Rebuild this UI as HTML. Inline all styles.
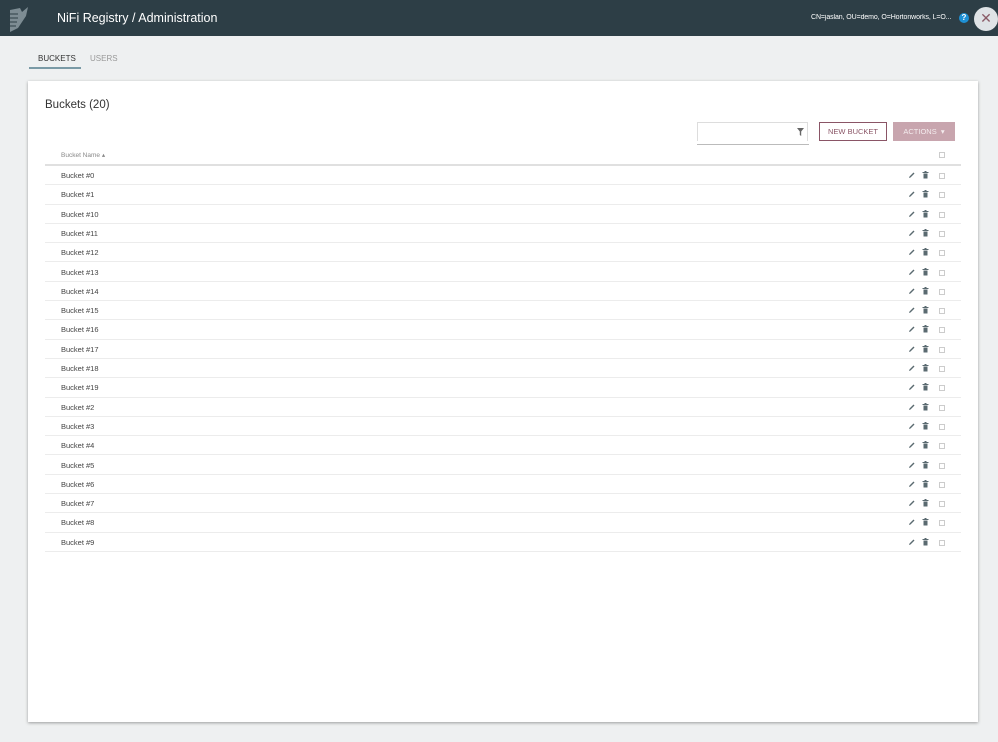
<!DOCTYPE html>
<html><head><meta charset="utf-8"><style>
*{box-sizing:border-box;margin:0;padding:0}
body{width:998px;height:742px;background:#eef0f1;font-family:"Liberation Sans",sans-serif;position:relative;overflow:hidden}
.hdr{position:absolute;left:0;top:0;width:998px;height:36px;background:#2d3e46}
.title{position:absolute;left:57px;top:11px;color:#fff;font-size:12.5px}
.user{position:absolute;left:811px;top:14px;width:142px;overflow:hidden;white-space:nowrap;color:#fff;font-size:7px;letter-spacing:-0.1px}
.help{position:absolute;left:959px;top:13px;width:10px;height:10px;border-radius:50%;background:#1e90d4;color:#fff;font-size:8px;text-align:center;line-height:10px;font-weight:bold}
.close{position:absolute;left:974px;top:7px;width:24px;height:24px;border-radius:50%;background:#dfe3e6;color:#8a5a66;text-align:center;line-height:23px;font-size:14px}
.tab{position:absolute;top:54px;font-size:8px;color:#666}
.card{position:absolute;left:28px;top:81px;width:950px;height:641px;background:#fff;box-shadow:0 1px 3px rgba(0,0,0,.35)}
.h{position:absolute;left:17px;top:18px;font-size:11.5px;color:#333}
.filter{position:absolute;left:669px;top:41px;width:111px;height:19px;border:1px solid #ddd;border-bottom:none}
.fl{position:absolute;left:669px;top:63px;width:112px;height:1px;background:#bbb}
.nb{position:absolute;left:791px;top:41px;width:68px;height:19px;border:1px solid #8a5566;color:#8a5566;font-size:7.5px;text-align:center;line-height:17px}
.act{position:absolute;left:865px;top:41px;width:62px;height:19px;background:#c8a5ae;color:#f4ecee;font-size:7.5px;text-align:center;line-height:19px}
.th{position:absolute;left:33px;top:70px;font-size:6.5px;color:#888}
.thl{position:absolute;left:17px;top:83px;width:916px;height:2px;background:#e0e0e0}
.row{position:absolute;left:17px;width:916px;height:19.3px;border-bottom:1px solid #ececec;font-size:7.5px;color:#444}
.row span{position:absolute;left:16px;top:5px}
.cb{position:absolute;width:6px;height:6px;border:1px solid #ccc}
.ic{position:absolute;top:5px}
</style></head><body>
<div class="hdr">
<svg style="position:absolute;left:8px;top:6px" width="22" height="26" viewBox="0 0 22 26"><path d="M2 4 L12 2 L14 6 L20 1 L18 10 L10 22 L2 26 Z" fill="#7d8c93"/><path d="M2 8h8M2 12h8M2 16h7M2 20h6" stroke="#2d3e46" stroke-width="1"/></svg>
<div class="title">NiFi Registry / Administration</div>
<div class="user">CN=jaslan, OU=demo, O=Hortonworks, L=O...</div>
<div class="help">?</div>
<div class="close">✕</div>
</div>
<div class="tab" style="left:38px;color:#333">BUCKETS</div>
<div class="tab" style="left:90px;color:#999">USERS</div>
<div style="position:absolute;left:29px;top:67px;width:52px;height:2px;background:#7a9aa6"></div>
<div class="card">
<div class="h">Buckets (20)</div>
<div class="filter"><svg style="position:absolute;right:3px;top:5px" width="7" height="8" viewBox="0 0 7 8"><path d="M0 0h7L4.2 3.5V8L2.8 7V3.5Z" fill="#666"/></svg></div>
<div class="fl"></div>
<div class="nb">NEW BUCKET</div>
<div class="act">ACTIONS &nbsp;▾</div>
<div class="th">Bucket Name ▴</div>
<div class="cb" style="left:911px;top:71px"></div>
<div class="thl"></div>
<div id="rows"></div>
</div>
<script>
var n=["0","1","10","11","12","13","14","15","16","17","18","19","2","3","4","5","6","7","8","9"],h="";
for(var i=0;i<20;i++){var t=85+i*19.3;h+='<div class="row" style="top:'+t+'px"><span>Bucket #'+n[i]+'</span><svg class="ic" style="left:863px" width="8" height="8" viewBox="0 0 8 8"><path d="M1 7 L1.5 5.5 L5.5 1.5 L6.5 2.5 L2.5 6.5 Z" fill="#5a6a70"/></svg><svg class="ic" style="left:877px" width="7" height="8" viewBox="0 0 7 8"><rect x="0.5" y="1" width="6" height="1" fill="#5a6a70"/><rect x="2.5" y="0" width="2" height="1" fill="#5a6a70"/><path d="M1.5 2.5h4v5h-4z" fill="#5a6a70"/></svg><div class="cb" style="left:894px;top:7px"></div></div>'}
document.getElementById("rows").innerHTML=h;
</script>
</body></html>
